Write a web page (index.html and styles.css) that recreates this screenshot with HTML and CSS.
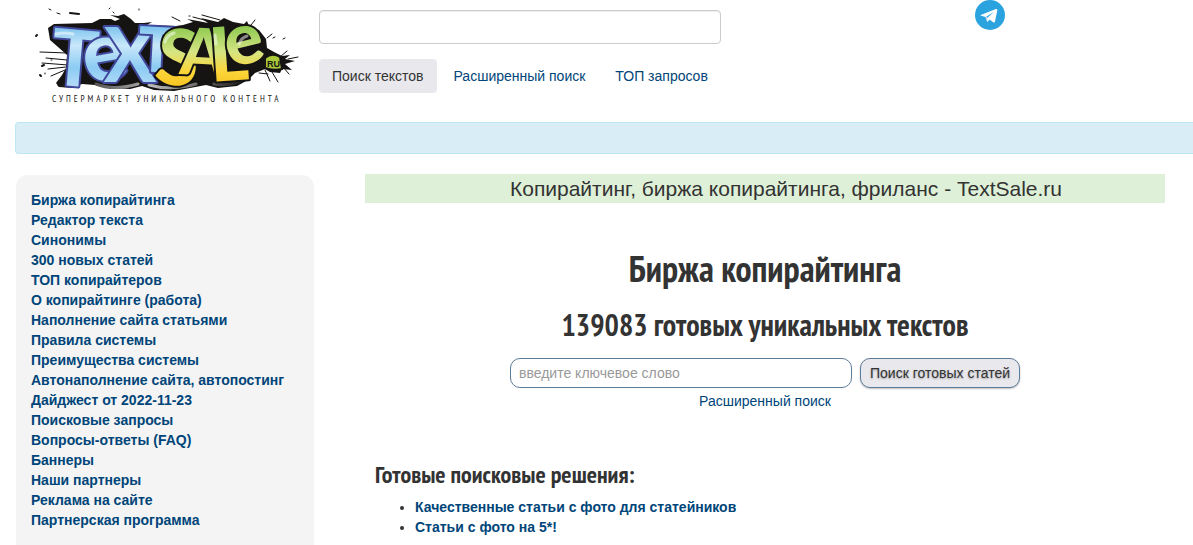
FILE: index.html
```html
<!DOCTYPE html>
<html lang="ru">

<head>
    <meta charset="UTF-8">
    <meta name="viewport" content="width=device-width, initial-scale=1.0">
    <title>Биржа копирайтинга - TextSale.ru</title>
    <link rel="stylesheet" href="styles.css">
</head>

<body>

    <!-- Шапка -->
    <header class="header">
        <a class="logo" href="#" aria-label="TextSale.ru">
            <svg class="logo-art" viewBox="0 0 270 88" width="270" height="88" aria-hidden="true">
                <defs>
                    <linearGradient id="blue" gradientUnits="userSpaceOnUse" x1="0" y1="18" x2="0" y2="82">
                        <stop offset="0" stop-color="#6dbcec" />
                        <stop offset="0.35" stop-color="#c9e8fa" />
                        <stop offset="0.7" stop-color="#8ccbf3" />
                        <stop offset="1" stop-color="#b5dcf8" />
                    </linearGradient>
                    <linearGradient id="green" gradientUnits="userSpaceOnUse" x1="0" y1="18" x2="0" y2="82">
                        <stop offset="0" stop-color="#84c54a" />
                        <stop offset="0.45" stop-color="#d5e583" />
                        <stop offset="0.75" stop-color="#fbd63a" />
                        <stop offset="1" stop-color="#f6c420" />
                    </linearGradient>
                    <linearGradient id="shade" x1="0" y1="0" x2="1" y2="0">
                        <stop offset="0" stop-color="#161412" />
                        <stop offset="0.5" stop-color="#b8b8b8" />
                        <stop offset="1" stop-color="#161412" />
                    </linearGradient>
                </defs>
                <!-- кляксы -->
                <path fill="#161412" d="M18 23L24 19L62 18L70 14L81 14L85 16L90 14L80 10L88 11L94 9L101 14L105 18L114 18L122 17L117 20L146 21L153 20L163 17L157 14L168 16L178 18L171 13L188 17L194 13L203 17L214 19L217 16L219 21L229 25L236 34L237 43L244 47L252 51L260 50L255 54L265 56L255 59L262 65L252 64L250 68L240 67L235 64L225 68L218 75L207 81L188 83L176 80L160 83L144 86L124 85L112 81L100 84L80 83L65 80L52 79L42 83L29 82L26 78L32 70L36 63L37 50L28 42L20 35Z" />
                <g fill="none" stroke="#161412" stroke-linecap="round">
                    <path stroke-width="1" d="M10 47L37 48M12 58L38 60M16 53L37 55M18 64L36 62M21 71L35 65M163 12L178 16M142 12L150 16M172 10L190 15M221 20L225 15M237 33L242 29M250 52L257 46M258 54L268 52M253 62L259 69M235 65L240 76M229 68L238 69M242 67L248 77" />
                    <path stroke-width="2" d="M40 8L49 9M6 31L7 30M12 61L14 60M10 70L11 71" />
                    <path stroke-width="1" d="M19 4L21 5M27 8L30 9M79 4L80 3M83 7L84 8M109 5L109 4M159 11L160 11M243 33L245 32M253 34L255 33M21 55L22 55M15 68L15 69M29 79L31 78" />
                </g>
                <g fill="none" stroke="url(#shade)" stroke-width="3" stroke-linecap="round">
                    <path d="M29 80Q39 82 48 77M66 79Q83 86 108 79M119 80Q140 86 166 79M184 79Q203 82 217 73" />
                </g>
                <!-- название -->
                <text class="logo-letters">
                    <tspan class="logo-blue"><tspan x="19" y="79" rotate="5" font-size="78">T</tspan><tspan x="57" y="79" rotate="-10" font-size="82">e</tspan><tspan x="74" y="77" font-size="77">X</tspan><tspan x="107" y="66" rotate="3" font-size="62">T</tspan></tspan><tspan class="logo-green"><tspan x="123" y="77" rotate="8" font-size="78">S</tspan><tspan x="149" y="69" rotate="3" font-size="65">A</tspan><tspan x="181" y="77" rotate="-4" font-size="75">L</tspan><tspan x="200" y="63" rotate="-14" font-size="72">e</tspan></tspan>
                </text>
                <!-- блики -->
                <g fill="none" stroke="#fff" stroke-width="3" stroke-linecap="round" opacity="0.5">
                    <path d="M26 29Q34 27 43 29M135 37Q137 30 144 28M209 39Q211 33 217 31M185 30L186 39" />
                </g>
                <path fill="#a9c83a" stroke="#161412" stroke-width="2" d="M235 53Q242 47 250 52L252 64Q243 66 235 63Z" />
                <text class="logo-ru" x="237" y="62">RU</text>
            </svg>
            <span class="logo-caption">СУПЕРМАРКЕТ УНИКАЛЬНОГО КОНТЕНТА</span>
        </a>

        <div class="top-search">
            <input type="text" class="top-input" aria-label="Поиск текстов">
            <nav class="tabs">
                <a class="tab active" href="#">Поиск текстов</a>
                <a class="tab" href="#">Расширенный поиск</a>
                <a class="tab" href="#">ТОП запросов</a>
            </nav>
        </div>

        <a class="telegram" href="#" aria-label="Telegram">
            <svg viewBox="0 0 30 30" width="30" height="30" aria-hidden="true">
                <circle cx="15" cy="15" r="15" fill="#2ba3df" />
                <path fill="#c8daea" d="M10 16L12 22L15 19Z" />
                <path fill="#fff" d="M5.8 15L21 9Q22.7 8.5 22.3 10.5L20 21.5Q19.6 23.2 18.1 22.2L14.6 19.6L12.8 21.5Q12.3 22 12.3 21L12.5 17.8L18.8 12L10.8 17L6 15.8Q5 15.5 5.8 15Z" />
            </svg>
        </a>
    </header>

    <div class="alert"></div>

    <div class="page">
        <!-- Меню -->
        <nav class="sidebar">
            <ul class="menu">
                <li><a href="#">Биржа копирайтинга</a></li>
                <li><a href="#">Редактор текста</a></li>
                <li><a href="#">Синонимы</a></li>
                <li><a href="#">300 новых статей</a></li>
                <li><a href="#">ТОП копирайтеров</a></li>
                <li><a href="#">О копирайтинге (работа)</a></li>
                <li><a href="#">Наполнение сайта статьями</a></li>
                <li><a href="#">Правила системы</a></li>
                <li><a href="#">Преимущества системы</a></li>
                <li><a href="#">Автонаполнение сайта, автопостинг</a></li>
                <li><a href="#">Дайджест от 2022-11-23</a></li>
                <li><a href="#">Поисковые запросы</a></li>
                <li><a href="#">Вопросы-ответы (FAQ)</a></li>
                <li><a href="#">Баннеры</a></li>
                <li><a href="#">Наши партнеры</a></li>
                <li><a href="#">Реклама на сайте</a></li>
                <li><a href="#">Партнерская программа</a></li>
            </ul>
        </nav>

        <!-- Содержимое -->
        <main class="content">
            <p class="slogan">Копирайтинг, биржа копирайтинга, фриланс - TextSale.ru</p>
            <h1>Биржа копирайтинга</h1>
            <h2>139083 готовых уникальных текстов</h2>
            <form class="search-form">
                <input type="text" class="search-input" placeholder="введите ключевое слово" aria-label="Ключевое слово">
                <button type="button" class="search-button">Поиск готовых статей</button>
            </form>
            <a class="advanced" href="#">Расширенный поиск</a>

            <section class="solutions">
                <h3>Готовые поисковые решения:</h3>
                <ul>
                    <li><a href="#">Качественные статьи с фото для статейников</a></li>
                    <li><a href="#">Статьи с фото на 5*!</a></li>
                </ul>
            </section>
        </main>
    </div>

</body>

</html>
```
FILE: styles.css
```css
/* Общие стили */
* {
    box-sizing: border-box;
}

body {
    display: flex;
    flex-direction: column;
    min-height: 100vh;
    margin: 0;
    font-family: "Liberation Sans", Arial, sans-serif;
    font-size: 14px;
    line-height: 20px;
    color: #333;
    background-color: #fff;
}

a {
    color: #004579;
    text-decoration: none;
}

a:hover {
    text-decoration: underline;
}

h1,
h2,
h3 {
    margin: 0;
    font-family: "PT Sans Narrow", "Liberation Sans Narrow", "Arial Narrow", sans-serif;
    font-weight: bold;
    line-height: 40px;
}

h1 {
    margin-top: 46px;
    font-size: 36px;
}

h2 {
    margin-top: 16px;
    font-size: 30px;
}

h3 {
    font-size: 24px;
}

/* Шапка */
.header {
    display: flex;
    align-items: flex-start;
    height: 122px;
    padding-left: 30px;
}

.logo {
    display: flex;
    flex-direction: column;
    width: 289px;
    padding-top: 5px;
}

.logo-art {
    overflow: visible;
}

.logo-letters {
    font-family: Lato, sans-serif;
    font-weight: 900;
    stroke-width: 4px;
    stroke-linejoin: round;
    /* Контур рисуется под заливкой */
    paint-order: stroke;
}

.logo-blue {
    fill: url(#blue);
    stroke: #41489b;
}

.logo-green {
    fill: url(#green);
    stroke: #161412;
}

.logo-ru {
    font-family: "Liberation Sans", Arial, sans-serif;
    font-size: 9px;
    font-weight: bold;
    fill: #161412;
}

.logo-caption {
    padding-left: 22px;
    font-family: "PT Sans Narrow", "Liberation Sans Narrow", sans-serif;
    font-size: 9px;
    line-height: 12px;
    letter-spacing: 3px;
    white-space: nowrap;
    color: #161412;
}

.top-search {
    width: 402px;
    padding-top: 10px;
}

.top-input {
    display: block;
    width: 100%;
    height: 34px;
    padding: 4px 6px;
    border: 1px solid #ccc;
    border-radius: 4px;
    box-shadow: inset 0 1px 1px rgba(0, 0, 0, 0.075);
}

.tabs {
    display: flex;
    gap: 4px;
    margin-top: 15px;
}

.tab {
    padding: 7px 13px;
    border-radius: 4px;
    white-space: nowrap;
}

.tab.active {
    color: #333;
    background-color: #e8e8ed;
}

.telegram {
    display: flex;
    margin-left: auto;
    margin-right: 188px;
}

/* Голубая полоса */
.alert {
    height: 32px;
    margin-left: 15px;
    border: 1px solid #bce8f1;
    border-right: none;
    border-radius: 4px 0 0 4px;
    background-color: #d9edf7;
}

.page {
    display: flex;
    flex-grow: 1;
    gap: 51px;
    padding: 20px 28px 0 16px;
}

/* Меню */
.sidebar {
    width: 298px;
    flex-shrink: 0;
    margin-top: 1px;
    padding: 15px 15px 0;
    border-radius: 12px 12px 0 0;
    background-color: #f4f4f4;
    font-weight: bold;
}

.menu {
    margin: 0;
    padding: 0;
    list-style-type: none;
}

/* Содержимое */
.content {
    flex-grow: 1;
    text-align: center;
}

.slogan {
    margin: 0;
    padding-left: 42px;
    font-size: 21px;
    line-height: 29px;
    background-color: #dff0d8;
}

.search-form {
    display: flex;
    justify-content: center;
    align-items: center;
    gap: 8px;
    margin-top: 13px;
}

.search-input {
    width: 342px;
    height: 30px;
    padding: 4px 8px;
    border: 1px solid #5c7c99;
    border-radius: 10px;
    font-family: inherit;
    font-size: 14px;
}

.search-input::placeholder {
    color: #999;
}

.search-button {
    height: 30px;
    padding: 4px 9px;
    border: 1px solid #5c7c99;
    border-radius: 10px;
    font-family: inherit;
    font-size: 14px;
    color: #333;
    text-shadow: 0 1px 2px rgba(0, 0, 0, 0.3);
    background-color: #e8e8ed;
    box-shadow: 0 1px 2px rgba(0, 0, 0, 0.25);
    cursor: pointer;
}

.advanced {
    display: inline-block;
    margin-top: 3px;
}

.solutions {
    margin-top: 44px;
    padding-left: 10px;
    text-align: left;
}

.solutions ul {
    margin: 2px 0 0;
    padding-left: 40px;
}

.solutions li a {
    font-weight: bold;
}
```
